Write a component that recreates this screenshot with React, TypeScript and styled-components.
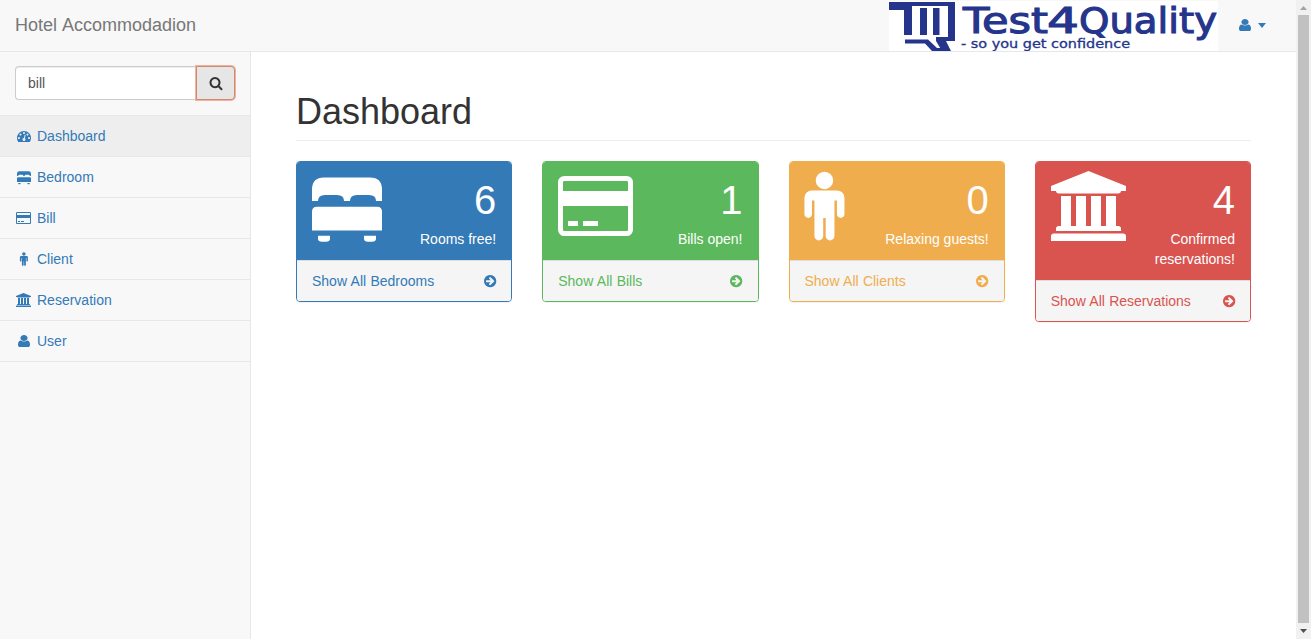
import React from 'react';
import styled, { createGlobalStyle } from 'styled-components';

const Global = createGlobalStyle`
  *, *::before, *::after { box-sizing: border-box; }
  body { margin: 0; background: #fff; color: #333; font: 14px/20px "Liberation Sans", Arial, sans-serif; overflow: hidden; }
  a { text-decoration: none; }
  svg { display: block; }
`;

const Window = styled.div`display: flex; width: 100%; height: 100vh; overflow: hidden;`;
const Page = styled.div`flex: 1; min-width: 0; display: flex; flex-direction: column; background: #f8f8f8;`;
const Navbar = styled.header`
  display: flex; justify-content: space-between; flex: none; height: 52px;
  border-bottom: 1px solid #e7e7e7; background: #f8f8f8;
`;
const Brand = styled.a`padding: 15px; font-size: 18px; word-spacing: 1px; color: #777;`;
const NavRight = styled.div`display: flex; align-items: flex-start; padding-right: 30px;`;
const UserMenu = styled.a`
  display: flex; align-items: center; gap: 7px; height: 50px; margin-left: 21px; color: #337ab7;
`;
const Caret = styled.span`border: 4px solid transparent; border-top: 5px solid currentColor; border-bottom: 0;`;
const Body = styled.div`display: flex; flex: 1; min-height: 0;`;
const Sidebar = styled.nav`width: 250px; flex: none; background: #f8f8f8;`;
const Search = styled.div`display: flex; padding: 14px 15px 15px; border-bottom: 1px solid #e7e7e7;`;
const SearchInput = styled.input`
  flex: 1; min-width: 0; height: 34px; padding: 6px 12px; border: 1px solid #ccc; border-right: 0;
  border-radius: 4px 0 0 4px; background: #fff; color: #555; font: inherit; outline: none;
  box-shadow: inset 0 1px 1px rgba(0,0,0,.075);
`;
const SearchButton = styled.button`
  width: 39px; height: 34px; padding: 0; display: grid; place-items: center;
  border: 1px solid #cd8a74; border-radius: 0 4px 4px 0; background: #e6e6e6; color: #333;
  box-shadow: 0 0 0 1px #f3b29b;
`;
const MenuItem = styled.a<{ $active?: boolean }>`
  display: flex; align-items: center; gap: 5px; height: 41px; padding: 0 15px;
  border-bottom: 1px solid #e7e7e7; color: #337ab7; background: ${p => (p.$active ? '#eee' : 'transparent')};
`;
const IconSlot = styled.span`width: 17px; display: grid; justify-items: center;`;
const Main = styled.main`flex: 1; min-width: 0; padding: 40px 45px 0; background: #fff; border-left: 1px solid #e7e7e7;`;
const Title = styled.h1`
  margin: 0 0 20px; padding-bottom: 9px; border-bottom: 1px solid #eee;
  font-size: 36px; line-height: 39px; font-weight: 400;
`;
const Cards = styled.div`display: grid; grid-template-columns: repeat(4, 1fr); gap: 30px; align-items: start;`;
const Card = styled.section<{ $color: string }>`
  border: 1px solid ${p => p.$color}; border-radius: 4px; color: ${p => p.$color};
  background: #fff; box-shadow: 0 1px 1px rgba(0,0,0,.05); overflow: hidden;
`;
const CardHead = styled.div<{ $color: string }>`
  display: flex; justify-content: space-between; padding: 10px 15px 11px; color: #fff; background: ${p => p.$color};
`;
const CardIcon = styled.div`width: 24px; height: 70px; margin-top: -1px; svg { overflow: visible; }`;
const CardText = styled.div`width: 130px; text-align: right;`;
const Huge = styled.div`font-size: 40px; line-height: 57px;`;
const CardFoot = styled.a`
  display: flex; justify-content: space-between; align-items: center; padding: 10px 15px;
  border-top: 1px solid #ddd; background: #f5f5f5; color: inherit; word-spacing: .4px;
`;
const Scrollbar = styled.div`
  width: 15px; flex: none; display: flex; flex-direction: column; align-items: center; background: #f1f1f1;
`;
const Thumb = styled.div`width: 11px; flex: 1; background: #c1c1c1;`;
const ScrollArrow = styled.div<{ $down?: boolean }>`
  height: ${p => (p.$down ? 16 : 15)}px; display: grid; place-items: center; color: ${p => (p.$down ? '#505050' : '#a3a3a3')};
`;

const paths = {
  user: 'M1536 1399q0 109-62.5 187t-150.5 78h-854q-88 0-150.5-78t-62.5-187q0-85 8.5-160.5t31.5-152 58.5-131 94-89 134.5-34.5q131 128 313 128t313-128q76 0 134.5 34.5t94 89 58.5 131 31.5 152 8.5 160.5zm-256-887q0 159-112.5 271.5t-271.5 112.5-271.5-112.5-112.5-271.5 112.5-271.5 271.5-112.5 271.5 112.5 112.5 271.5z',
  search: 'M1216 832q0-185-131.5-316.5t-316.5-131.5-316.5 131.5-131.5 316.5 131.5 316.5 316.5 131.5 316.5-131.5 131.5-316.5zm512 832q0 52-38 90t-90 38q-54 0-90-38l-343-342q-179 124-399 124-143 0-273.5-55.5t-225-150-150-225-55.5-273.5 55.5-273.5 150-225 225-150 273.5-55.5 273.5 55.5 225 150 150 225 55.5 273.5q0 220-124 399l343 343q37 37 37 90z',
  arrow: 'M1413 896q0-27-18-45l-91-91-362-362q-18-18-45-18t-45 18l-91 91q-18 18-18 45t18 45l189 189h-502q-26 0-45 19t-19 45v128q0 26 19 45t45 19h502l-189 189q-18 18-18 45t18 45l91 91q18 18 45 18t45-18l362-362 91-91q18-18 18-45zm251 0q0 209-103 385.5t-279.5 279.5-385.5 103-385.5-103-279.5-279.5-103-385.5 103-385.5 279.5-279.5 385.5-103 385.5 103 279.5 279.5 103 385.5z',
  gauge: 'M384 1152q0-53-37.5-90.5t-90.5-37.5-90.5 37.5-37.5 90.5 37.5 90.5 90.5 37.5 90.5-37.5 37.5-90.5zm192-448q0-53-37.5-90.5t-90.5-37.5-90.5 37.5-37.5 90.5 37.5 90.5 90.5 37.5 90.5-37.5 37.5-90.5zm428 481l101-382q6-26-7.5-48.5t-38.5-29.5-48 6.5-30 39.5l-101 382q-60 5-107 43.5t-63 98.5q-20 77 20 146t117 89 146-20 89-117q16-60-6-117t-72-91zm660-33q0-53-37.5-90.5t-90.5-37.5-90.5 37.5-37.5 90.5 37.5 90.5 90.5 37.5 90.5-37.5 37.5-90.5zm-640-640q0-53-37.5-90.5t-90.5-37.5-90.5 37.5-37.5 90.5 37.5 90.5 90.5 37.5 90.5-37.5 37.5-90.5zm448 192q0-53-37.5-90.5t-90.5-37.5-90.5 37.5-37.5 90.5 37.5 90.5 90.5 37.5 90.5-37.5 37.5-90.5zm320 448q0 261-141 483-19 29-54 29h-1402q-35 0-54-29-141-221-141-483 0-182 71-348t191-286 286-191 348-71 348 71 286 191 191 286 71 348z',
  bank: 'M960 0l960 384v128h-128q0 26-20.5 45t-48.5 19h-1526q-28 0-48.5-19t-20.5-45h-128v-128zm-704 640h256v768h128v-768h256v768h128v-768h256v768h128v-768h256v768h59q28 0 48.5 19t20.5 45v64h-1664v-64q0-26 20.5-45t48.5-19h59v-768zm1595 960q28 0 48.5 19t20.5 45v128h-1920v-128q0-26 20.5-45t48.5-19h1782z',
  card: 'M160 0h1600q66 0 113 47t47 113v1216q0 66-47 113t-113 47h-1600q-66 0-113-47t-47-113v-1216q0-66 47-113t113-47zm0 128q-13 0-22.5 9.500t-9.500 22.500v224h1664v-224q0-13-9.500-22.500t-22.500-9.500zm1600 1280q13 0 22.500-9.500t9.500-22.500v-608h-1664v608q0 13 9.500 22.500t22.500 9.500zm-1504-128v-128h256v128zm384 0v-128h384v128z',
  male: 'M1024 672v416q0 40-28 68t-68 28-68-28-28-68v-352h-64v912q0 46-33 79t-79 33-79-33-33-79v-464h-64v464q0 46-33 79t-79 33-79-33-33-79v-912h-64v352q0 40-28 68t-68 28-68-28-28-68v-416q0-80 56-136t136-56h640q80 0 136 56t56 136zm-288-448q0 93-65.500 158.500t-158.500 65.500-158.500-65.500-65.500-158.500 65.500-158.500 158.500-65.500 158.500 65.500 65.500 158.500z',
  bed: 'M0 23.500V12Q0 0 12 0H58Q70 0 70 12V23.500H64Q64 17.500 57 17.500H45Q38 17.500 38 23.500H32Q32 17.500 25 17.500H13Q6 17.500 6 23.500ZM5 29.300H65Q70 29.300 70 34.300V53H0V34.300Q0 29.300 5 29.300ZM6 58.300H18V61Q18 64.300 14 64.300H10Q6 64.300 6 61ZM52 58.300H64V61Q64 64.300 60 64.300H56Q52 64.300 52 61Z',
};
type IconName = keyof typeof paths;
/* viewBox, then width and height in em */
const boxes: Record<IconName, [string, number, number]> = {
  user: ['256 128 1280 1536', 12 / 14, 12 / 14],
  search: ['0 0 1792 1792', 1, 1.02],
  arrow: ['128 0 1536 1792', 12.3 / 14, 14.3 / 14],
  gauge: ['0 0 1792 1792', 1, 1],
  bank: ['0 0 1920 1792', 15 / 14, 1],
  card: ['0 -128 1920 1792', 15 / 14, 1],
  male: ['14 -16 1024 1792', 8 / 14, 1],
  bed: ['0 -6.5 70 70', 1, 1],
};

function Icon({ name, em }: { name: IconName; em: number }) {
  const [box, w, h] = boxes[name];
  return (
    <svg width={w * em} height={h * em} viewBox={box} preserveAspectRatio="none" fill="currentColor" aria-hidden="true" overflow="visible">
      <path d={paths[name]} />
    </svg>
  );
}

function Logo() {
  return (
    <svg width="329" height="51" viewBox="0 0 329 51" role="img" aria-label="Test4Quality">
      <rect y="1" width="329" height="50" fill="#fff" />
      <g fill="#25358c">
        <path d="M0 2H66V6H23V35H15V10H0Z" />
        <path d="M31 8H38V35H31ZM44 8H50.500V35H44Z" />
        <path d="M59 5H66V41H57L62 51H53L47 41V37H59Z" />
        <path d="M16 39.500H39L48 48H55L57 51H43L36 43.500H16Z" />
      </g>
      <g fill="#25358c" stroke="#25358c" strokeWidth="1.1" fontFamily="DejaVu Sans, sans-serif">
        <text x="74" y="32.500" fontSize="35" textLength="85" lengthAdjust="spacingAndGlyphs">Test</text>
        <text x="158" y="32.500" fontSize="35" textLength="32" lengthAdjust="spacingAndGlyphs">4</text>
        <text x="190" y="32.500" fontSize="35" textLength="138" lengthAdjust="spacingAndGlyphs">Quality</text>
        <text x="72" y="48" fontSize="11.500" strokeWidth=".3" textLength="169" lengthAdjust="spacingAndGlyphs">- so you get confidence</text>
      </g>
    </svg>
  );
}

const menu: { icon: IconName; label: string }[] = [
  { icon: 'gauge', label: 'Dashboard' },
  { icon: 'bed', label: 'Bedroom' },
  { icon: 'card', label: 'Bill' },
  { icon: 'male', label: 'Client' },
  { icon: 'bank', label: 'Reservation' },
  { icon: 'user', label: 'User' },
];
const cards: { icon: IconName; color: string; count: number; text: string; link: string }[] = [
  { icon: 'bed', color: '#337ab7', count: 6, text: 'Rooms free!', link: 'Show All Bedrooms' },
  { icon: 'card', color: '#5cb85c', count: 1, text: 'Bills open!', link: 'Show All Bills' },
  { icon: 'male', color: '#f0ad4e', count: 0, text: 'Relaxing guests!', link: 'Show All Clients' },
  { icon: 'bank', color: '#d9534f', count: 4, text: 'Confirmed reservations!', link: 'Show All Reservations' },
];

export default function App() {
  return (
    <Window>
      <Global />
      <Page>
        <Navbar>
          <Brand>Hotel Accommodadion</Brand>
          <NavRight>
            <Logo />
            <UserMenu><Icon name="user" em={14} /><Caret /></UserMenu>
          </NavRight>
        </Navbar>
        <Body>
          <Sidebar>
            <Search>
              <SearchInput defaultValue="bill" aria-label="Search" />
              <SearchButton aria-label="Search"><Icon name="search" em={14} /></SearchButton>
            </Search>
            {menu.map((m, i) => (
              <MenuItem key={m.label} $active={i === 0}>
                <IconSlot><Icon name={m.icon} em={14} /></IconSlot>{m.label}
              </MenuItem>
            ))}
          </Sidebar>
          <Main>
            <Title>Dashboard</Title>
            <Cards>
              {cards.map(c => (
                <Card key={c.link} $color={c.color}>
                  <CardHead $color={c.color}>
                    <CardIcon><Icon name={c.icon} em={70} /></CardIcon>
                    <CardText><Huge>{c.count}</Huge>{c.text}</CardText>
                  </CardHead>
                  <CardFoot>{c.link}<Icon name="arrow" em={14} /></CardFoot>
                </Card>
              ))}
            </Cards>
          </Main>
        </Body>
      </Page>
      <Scrollbar>
        <ScrollArrow><svg width="7" height="4"><path d="M0 4L3.500 0L7 4Z" fill="currentColor" /></svg></ScrollArrow>
        <Thumb />
        <ScrollArrow $down><svg width="7" height="4"><path d="M0 0H7L3.500 4Z" fill="currentColor" /></svg></ScrollArrow>
      </Scrollbar>
    </Window>
  );
}
